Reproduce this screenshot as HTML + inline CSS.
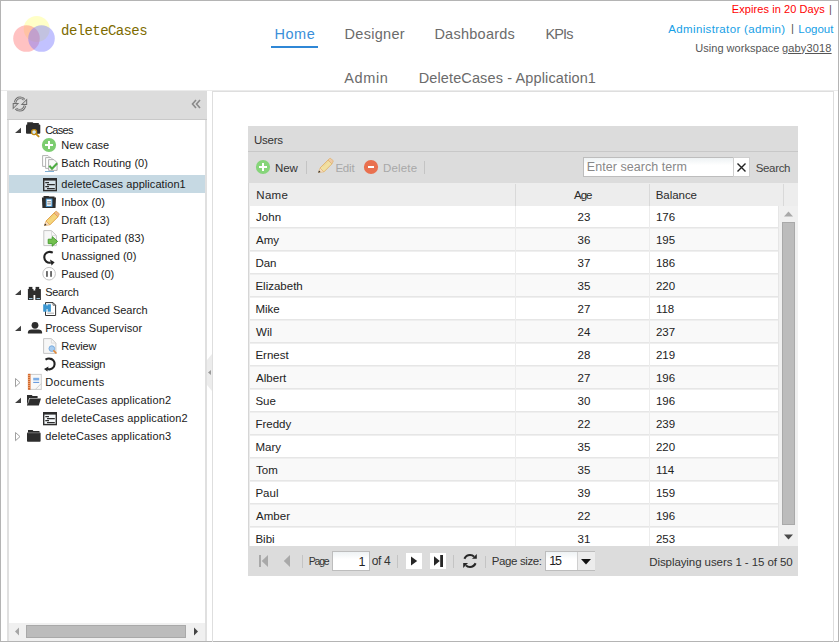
<!DOCTYPE html>
<html><head><meta charset="utf-8"><style>
html,body{margin:0;padding:0;width:839px;height:642px;overflow:hidden;background:#fff}
body{position:relative;font-family:"Liberation Sans", sans-serif}
.r{position:absolute;display:block}
.t{position:absolute;white-space:nowrap;font-family:"Liberation Sans", sans-serif}
</style></head><body>
<div class="r" style="left:0px;top:0px;width:839px;height:642px;background:#fff;"></div>
<div class="r" style="left:0px;top:90px;width:839px;height:1px;background:#ebebeb;"></div>
<div class="r" style="left:0px;top:0px;width:839px;height:1px;background:#b4b4b4;"></div>
<div class="r" style="left:0px;top:0px;width:1px;height:642px;background:#b4b4b4;"></div>
<div class="r" style="left:838px;top:0px;width:1px;height:642px;background:#b4b4b4;"></div>
<div class="r" style="left:0px;top:641px;width:839px;height:1px;background:#b4b4b4;"></div>
<svg class="r" style="left:10px;top:12px" width="50" height="42" viewBox="0 0 50 42"><circle cx="26.7" cy="17" r="13" fill="#ffff99" fill-opacity="0.55"/>
<circle cx="16.5" cy="26.5" r="13.3" fill="#ff7777" fill-opacity="0.45"/>
<circle cx="31.5" cy="26.5" r="13.3" fill="#7777ff" fill-opacity="0.45"/></svg>
<div class="t" style="left:61.10px;top:24.15px;font-size:14px;line-height:14px;color:#7d6b00;letter-spacing:-0.594px;font-family:'Liberation Mono', monospace;">deleteCases</div>
<div class="t" style="left:274.47px;top:26.73px;font-size:14.5px;line-height:14.5px;color:#3b8fd9;letter-spacing:0.516px;font-family:'Liberation Sans', sans-serif;">Home</div>
<div class="r" style="left:271px;top:46px;width:47px;height:2px;background:#2f87d6;"></div>
<div class="t" style="left:344.57px;top:26.73px;font-size:14.5px;line-height:14.5px;color:#6b6b6b;letter-spacing:0.283px;font-family:'Liberation Sans', sans-serif;">Designer</div>
<div class="t" style="left:434.38px;top:26.73px;font-size:14.5px;line-height:14.5px;color:#6b6b6b;letter-spacing:0.254px;font-family:'Liberation Sans', sans-serif;">Dashboards</div>
<div class="t" style="left:545.48px;top:26.73px;font-size:14.5px;line-height:14.5px;color:#6b6b6b;letter-spacing:-0.859px;font-family:'Liberation Sans', sans-serif;">KPIs</div>
<div class="t" style="left:344.17px;top:70.73px;font-size:14.5px;line-height:14.5px;color:#6b6b6b;letter-spacing:0.667px;font-family:'Liberation Sans', sans-serif;">Admin</div>
<div class="t" style="left:418.67px;top:70.73px;font-size:14.5px;line-height:14.5px;color:#6b6b6b;letter-spacing:0.127px;font-family:'Liberation Sans', sans-serif;">DeleteCases - Application1</div>
<div class="t" style="left:731.75px;top:4.39px;font-size:11px;line-height:11px;color:#ff0000;letter-spacing:0.082px;font-family:'Liberation Sans', sans-serif;">Expires in 20 Days</div>
<div class="t" style="left:829.05px;top:3.69px;font-size:11px;line-height:11px;color:#6a4a4a;font-family:'Liberation Sans', sans-serif;">|</div>
<div class="t" style="left:668.32px;top:23.87px;font-size:11.5px;line-height:11.5px;color:#16a0e6;letter-spacing:0.347px;font-family:'Liberation Sans', sans-serif;">Administrator (admin)</div>
<div class="t" style="left:790.92px;top:22.87px;font-size:11.5px;line-height:11.5px;color:#555;font-family:'Liberation Sans', sans-serif;">|</div>
<div class="t" style="left:798.22px;top:23.87px;font-size:11.5px;line-height:11.5px;color:#16a0e6;letter-spacing:0.013px;font-family:'Liberation Sans', sans-serif;">Logout</div>
<div class="t" style="left:695.25px;top:42.69px;font-size:11px;line-height:11px;color:#555;letter-spacing:0.031px;font-family:'Liberation Sans', sans-serif;">Using workspace</div>
<div class="t" style="left:781.95px;top:42.69px;font-size:11px;line-height:11px;color:#555;letter-spacing:0.167px;font-family:'Liberation Sans', sans-serif;text-decoration:underline;">gaby3018</div>
<div class="r" style="left:7px;top:91px;width:200px;height:28px;background:#dcdcdc;"></div>
<div class="r" style="left:7px;top:119px;width:200px;height:1px;background:#c9c9c9;"></div>
<div class="r" style="left:7px;top:120px;width:2px;height:521px;background:#e0e0e0;"></div>
<div class="r" style="left:205px;top:120px;width:2px;height:521px;background:#e0e0e0;"></div>
<svg class="r" style="left:11px;top:95px" width="18" height="18" viewBox="11 95 18 18"><g fill="none" stroke="#6e6e6e" stroke-width="2.6"><path d="M15 102.6 Q16.2 97.8 20.2 97.8 Q22.9 97.8 24.2 99.8"/><path d="M25 105.6 Q23.8 110.2 19.8 110.2 Q17.1 110.2 15.8 108.4"/></g>
<path d="M27.2 98.4 V104.9 H20.7 Z" fill="#6e6e6e"/><path d="M12.7 109.6 V103.1 H19.2 Z" fill="#6e6e6e"/>
<g fill="none" stroke="#cfcfcf" stroke-width="0.9"><path d="M15 102.6 Q16.2 97.8 20.2 97.8 Q22.9 97.8 24.2 99.8"/><path d="M25 105.6 Q23.8 110.2 19.8 110.2 Q17.1 110.2 15.8 108.4"/></g>
<path d="M26.2 100.6 V103.9 H22.9 Z" fill="#cfcfcf"/><path d="M13.7 107.4 V104.1 H17 Z" fill="#cfcfcf"/></svg>
<svg class="r" style="left:190px;top:98px" width="12" height="12" viewBox="0 0 12 12"><path d="M6 2 L2.5 6 L6 10 M10 2 L6.5 6 L10 10" fill="none" stroke="#8a8a8a" stroke-width="1.6"/></svg>
<div class="r" style="left:9px;top:623px;width:196px;height:18px;background:#f0f0f0;"></div>
<svg class="r" style="left:14px;top:627px" width="6" height="9" viewBox="0 0 6 9"><path d="M5 0.5 L1 4.5 L5 8.5Z" fill="#a5a5a5"/></svg>
<div class="r" style="left:26px;top:625px;width:160px;height:13px;background:#bcbcbc;box-sizing:border-box;border:1px solid #a9a9a9;"></div>
<svg class="r" style="left:193px;top:627px" width="6" height="9" viewBox="0 0 6 9"><path d="M1 0.5 L5 4.5 L1 8.5Z" fill="#444"/></svg>
<svg class="r" style="left:207px;top:354px" width="6" height="37" viewBox="0 0 6 37"><path d="M0 6 L5 0 L5 37 L0 31 Z" fill="#ececec"/><path d="M4 16 L1 18.5 L4 21Z" fill="#9a9a9a"/></svg>
<div class="r" style="left:212px;top:91px;width:622px;height:1px;background:#dedede;"></div>
<div class="r" style="left:212px;top:91px;width:1px;height:551px;background:#dedede;"></div>
<div class="r" style="left:833px;top:91px;width:1px;height:551px;background:#dedede;"></div>
<div class="r" style="left:9px;top:175px;width:196px;height:18px;background:#c6d9e3;"></div>
<div class="t" style="left:45.15px;top:124.69px;font-size:11px;line-height:11px;color:#1a1a1a;letter-spacing:-0.717px;font-family:'Liberation Sans', sans-serif;">Cases</div>
<div class="t" style="left:61.35px;top:140.29px;font-size:11px;line-height:11px;color:#1a1a1a;letter-spacing:-0.092px;font-family:'Liberation Sans', sans-serif;">New case</div>
<div class="t" style="left:61.35px;top:158.39px;font-size:11px;line-height:11px;color:#1a1a1a;letter-spacing:0.064px;font-family:'Liberation Sans', sans-serif;">Batch Routing (0)</div>
<div class="t" style="left:61.35px;top:179.19px;font-size:11px;line-height:11px;color:#1a1a1a;letter-spacing:0.063px;font-family:'Liberation Sans', sans-serif;">deleteCases application1</div>
<div class="t" style="left:61.35px;top:197.39px;font-size:11px;line-height:11px;color:#1a1a1a;letter-spacing:0.026px;font-family:'Liberation Sans', sans-serif;">Inbox (0)</div>
<div class="t" style="left:61.35px;top:214.59px;font-size:11px;line-height:11px;color:#1a1a1a;letter-spacing:0.204px;font-family:'Liberation Sans', sans-serif;">Draft (13)</div>
<div class="t" style="left:61.35px;top:232.59px;font-size:11px;line-height:11px;color:#1a1a1a;letter-spacing:0.148px;font-family:'Liberation Sans', sans-serif;">Participated (83)</div>
<div class="t" style="left:61.35px;top:251.19px;font-size:11px;line-height:11px;color:#1a1a1a;letter-spacing:0.037px;font-family:'Liberation Sans', sans-serif;">Unassigned (0)</div>
<div class="t" style="left:61.35px;top:268.69px;font-size:11px;line-height:11px;color:#1a1a1a;letter-spacing:-0.119px;font-family:'Liberation Sans', sans-serif;">Paused (0)</div>
<div class="t" style="left:45.15px;top:287.49px;font-size:11px;line-height:11px;color:#1a1a1a;letter-spacing:-0.248px;font-family:'Liberation Sans', sans-serif;">Search</div>
<div class="t" style="left:61.35px;top:305.19px;font-size:11px;line-height:11px;color:#1a1a1a;letter-spacing:-0.040px;font-family:'Liberation Sans', sans-serif;">Advanced Search</div>
<div class="t" style="left:45.15px;top:323.29px;font-size:11px;line-height:11px;color:#1a1a1a;letter-spacing:0.096px;font-family:'Liberation Sans', sans-serif;">Process Supervisor</div>
<div class="t" style="left:61.35px;top:341.49px;font-size:11px;line-height:11px;color:#1a1a1a;letter-spacing:-0.183px;font-family:'Liberation Sans', sans-serif;">Review</div>
<div class="t" style="left:61.35px;top:359.19px;font-size:11px;line-height:11px;color:#1a1a1a;letter-spacing:-0.255px;font-family:'Liberation Sans', sans-serif;">Reassign</div>
<div class="t" style="left:45.15px;top:377.29px;font-size:11px;line-height:11px;color:#1a1a1a;letter-spacing:0.420px;font-family:'Liberation Sans', sans-serif;">Documents</div>
<div class="t" style="left:45.15px;top:395.49px;font-size:11px;line-height:11px;color:#1a1a1a;letter-spacing:0.128px;font-family:'Liberation Sans', sans-serif;">deleteCases application2</div>
<div class="t" style="left:61.35px;top:413.19px;font-size:11px;line-height:11px;color:#1a1a1a;letter-spacing:0.150px;font-family:'Liberation Sans', sans-serif;">deleteCases application2</div>
<div class="t" style="left:45.15px;top:431.29px;font-size:11px;line-height:11px;color:#1a1a1a;letter-spacing:0.128px;font-family:'Liberation Sans', sans-serif;">deleteCases application3</div>
<svg class="r" style="left:13px;top:127px" width="10" height="8" viewBox="13 127 10 8"><path d="M15 133 L21 127.7 L21 133 Z" fill="#404040"/></svg>
<svg class="r" style="left:13px;top:289px" width="10" height="8" viewBox="13 289 10 8"><path d="M15 295 L21 289.7 L21 295 Z" fill="#404040"/></svg>
<svg class="r" style="left:13px;top:324.5px" width="10" height="8.0" viewBox="13 324.5 10 8.0"><path d="M15 330.5 L21 325.2 L21 330.5 Z" fill="#404040"/></svg>
<svg class="r" style="left:13px;top:397px" width="10" height="8" viewBox="13 397 10 8"><path d="M15 403 L21 397.7 L21 403 Z" fill="#404040"/></svg>
<svg class="r" style="left:13px;top:376.5px" width="10" height="12.0" viewBox="13 376.5 10 12.0"><path d="M15.5 378.0 L20 382.1 L15.5 386.2 Z" fill="#fff" stroke="#a0a0a0" stroke-width="1"/></svg>
<svg class="r" style="left:13px;top:430.5px" width="10" height="12.0" viewBox="13 430.5 10 12.0"><path d="M15.5 432.0 L20 436.1 L15.5 440.2 Z" fill="#fff" stroke="#a0a0a0" stroke-width="1"/></svg>
<svg class="r" style="left:24px;top:120px" width="18" height="20" viewBox="24 120 18 20"><path d="M27.2 122.3 H32.6 L33.4 123 H38.8 V125 H27.2 Z" fill="#2d2d2d"/>
<rect x="26" y="124.4" width="14.3" height="9.4" rx="1" fill="#2d2d2d"/>
<circle cx="34.1" cy="132.1" r="2.5" fill="#d3e9f8" stroke="#c08a14" stroke-width="1.3"/>
<path d="M35.9 133.9 L38.6 136.4" stroke="#c08a14" stroke-width="1.9" stroke-linecap="round"/></svg>
<svg class="r" style="left:41px;top:137px" width="16" height="16" viewBox="41 137 16 16"><circle cx="49" cy="145" r="7.1" fill="#7ccd70"/><rect x="48" y="141" width="2" height="8" fill="#fff"/><rect x="45" y="144" width="8" height="2" fill="#fff"/></svg>
<svg class="r" style="left:40px;top:153px" width="20" height="21" viewBox="40 153 20 21"><path d="M42.6 155.6 H48 L49.6 157.2 V166.4 H42.6 Z" fill="#fff" stroke="#a9a9a9" stroke-width="0.9"/>
<path d="M45.6 157.6 H51 L52.6 159.2 V168.4 H45.6 Z" fill="#fff" stroke="#a9a9a9" stroke-width="0.9"/>
<path d="M48.6 159.6 H54 L57.1 162.7 V170.4 H48.6 Z" fill="#fafafa" stroke="#a9a9a9" stroke-width="0.9"/>
<path d="M49.3 165.8 L52 168.8 L57.2 163.3" fill="none" stroke="#4eac43" stroke-width="2.1"/>
<path d="M45 171.5 H54" stroke="#6fa6cf" stroke-width="0.9"/></svg>
<svg class="r" style="left:42px;top:176.8px" width="17" height="16.0" viewBox="42 176.8 17 16.0"><rect x="43.7" y="178.5" width="12.6" height="11.9" fill="#e8f0f4" fill-opacity="0.5" stroke="#2d2d2d" stroke-width="1.4"/>
<rect x="43" y="177.8" width="14" height="2.6" fill="#2d2d2d"/>
<path d="M45.3 182.5 H49 M47 184.5 H54.8 M45.3 186.5 H49 M47 188.5 H54.8" stroke="#2d2d2d" stroke-width="1.2"/></svg>
<svg class="r" style="left:42px;top:411px" width="17" height="16" viewBox="42 411 17 16"><rect x="43.7" y="412.7" width="12.6" height="11.9" fill="#e8f0f4" fill-opacity="0.5" stroke="#2d2d2d" stroke-width="1.4"/>
<rect x="43" y="412" width="14" height="2.6" fill="#2d2d2d"/>
<path d="M45.3 416.7 H49 M47 418.7 H54.8 M45.3 420.7 H49 M47 422.7 H54.8" stroke="#2d2d2d" stroke-width="1.2"/></svg>
<svg class="r" style="left:40px;top:194px" width="18" height="16" viewBox="40 194 18 16"><path d="M43.5 196 H48.5 L49.3 196.6 H54.5 V198 H43.5 Z" fill="#2d2d2d"/>
<path d="M41.9 197.6 H56 L55.5 207.9 H42.4 Z" fill="#2d2d2d"/>
<rect x="45.8" y="198.6" width="6.6" height="8.3" fill="#4b9ad4"/>
<rect x="46.8" y="199.6" width="4.6" height="6.3" fill="#fff"/>
<path d="M47.3 201.8 H50.9 M47.3 203.9 H50.9" stroke="#555" stroke-width="0.8"/></svg>
<svg class="r" style="left:43px;top:209px" width="18" height="18" viewBox="43 209 18 18"><path d="M46.0 221.0 L54.0 213.0 L57.9 216.9 L49.9 224.9 Z" fill="#f5d67c" stroke="#e3a64f" stroke-width="1"/>
<path d="M49 219.5 L55.5 213" stroke="#e3a64f" stroke-width="0.5" opacity="0.6"/>
<path d="M54.0 213.0 L55.3 211.7 Q56.3 210.9 57.3 211.9 L58.9 213.5 Q59.5 214.5 58.7 215.3 L57.9 216.9 Z" fill="#eeb88a" stroke="#e3a64f" stroke-width="0.9"/>
<path d="M46.0 221.0 L44.4 225.6 L49.9 224.9 Z" fill="#f6dcc0" stroke="#e3a64f" stroke-width="0.6"/>
<path d="M44.2 225.8 L45.0 223.6 L46.5 225.1 Z" fill="#222"/></svg>
<svg class="r" style="left:41px;top:228px" width="19" height="20" viewBox="41 228 19 20"><path d="M43.8 230.6 H51.5 L56.4 235.5 V245.6 H43.8 Z" fill="#f7f7f7" stroke="#c6c6c6" stroke-width="1"/>
<path d="M51.5 230.6 V235.5 H56.4" fill="none" stroke="#d6d6d6" stroke-width="0.8"/>
<path d="M48.2 239.2 H52.2 V236.6 L57.6 241.4 L52.2 246.2 V243.6 H48.2 Z" fill="#74c04f" stroke="#3f9a2b" stroke-width="0.9"/></svg>
<svg class="r" style="left:41px;top:249px" width="16" height="18" viewBox="41 249 16 18"><path d="M52.8 252.6 Q50.5 251.6 48.6 252 A5.3 5.3 0 0 0 44.3 257.5 A5.2 5.2 0 0 0 50.8 262.6" fill="none" stroke="#222" stroke-width="2.1"/>
<path d="M50 259.6 L54.6 262.2 L51.6 265.6 Z" fill="#222"/></svg>
<svg class="r" style="left:41px;top:266px" width="16" height="16" viewBox="41 266 16 16"><circle cx="49.1" cy="273.7" r="6.3" fill="#fff" stroke="#c4c4c4" stroke-width="1"/><rect x="46" y="271.1" width="1.9" height="5.7" fill="#6a6a6a"/><rect x="50.1" y="271.1" width="1.9" height="5.7" fill="#6a6a6a"/></svg>
<svg class="r" style="left:26px;top:286px" width="16" height="15" viewBox="26 286 16 15"><rect x="28.8" y="286.9" width="3.6" height="2.7" fill="#2d2d2d"/><rect x="35.6" y="286.9" width="3.6" height="2.7" fill="#2d2d2d"/>
<rect x="27.9" y="289" width="5.6" height="11" rx="0.6" fill="#2d2d2d"/><rect x="35.3" y="289" width="5.6" height="11" rx="0.6" fill="#2d2d2d"/>
<rect x="33" y="290.5" width="3" height="4.5" fill="#2d2d2d"/>
<path d="M29 298.6 H32.5 M36.5 298.6 H40" stroke="#a8d6f0" stroke-width="1"/></svg>
<svg class="r" style="left:42px;top:301px" width="16" height="16" viewBox="42 301 16 16"><path d="M45.5 302.6 H53 L55.6 305.2 V315.5 H45.5 Z" fill="#fff" stroke="#333" stroke-width="1"/>
<path d="M53 302.6 V305.2 H55.6" fill="none" stroke="#333" stroke-width="0.7"/>
<rect x="43.2" y="304.3" width="3.3" height="7.4" fill="#3c96d0"/><rect x="47.6" y="304.3" width="3.3" height="7.4" fill="#3c96d0"/><rect x="46" y="305.5" width="2" height="3.6" fill="#3c96d0"/>
<path d="M47.3 313.2 H54" stroke="#b8b8b8" stroke-width="1.2"/></svg>
<svg class="r" style="left:26px;top:320px" width="18" height="15" viewBox="26 320 18 15"><circle cx="35" cy="325.3" r="3.4" fill="#2d2d2d"/><path d="M27.9 333.6 V332.4 Q28.2 329.6 31.5 329.6 H38.5 Q41.8 329.6 42.1 332.4 V333.6 Z" fill="#2d2d2d"/></svg>
<svg class="r" style="left:42px;top:337px" width="16" height="18" viewBox="42 337 16 18"><path d="M43.6 338.6 H51.4 L55.9 343.1 V353.4 H43.6 Z" fill="#f7f7f7" stroke="#c6c6c6" stroke-width="1"/>
<path d="M51.4 338.6 V343.1 H55.9" fill="none" stroke="#d6d6d6" stroke-width="0.8"/>
<circle cx="51.8" cy="348.6" r="2.8" fill="#a9cdf0" stroke="#78ace0" stroke-width="1"/>
<path d="M53.9 350.8 L56 353" stroke="#e08a3a" stroke-width="1.7" stroke-linecap="round"/></svg>
<svg class="r" style="left:42px;top:356px" width="15" height="17" viewBox="42 356 15 17"><path d="M45.5 359.6 Q47.6 358.4 49.6 358.6 A5.2 5.2 0 0 1 54.6 364.3 A5.2 5.2 0 0 1 47.5 369" fill="none" stroke="#222" stroke-width="2.1"/>
<path d="M48.5 366.4 L44 368.9 L47.4 371.6 Z" fill="#222"/></svg>
<svg class="r" style="left:26px;top:373px" width="18" height="18" viewBox="26 373 18 18"><rect x="29.5" y="374.4" width="11.8" height="15" fill="#f9f9f9" stroke="#cdcdcd" stroke-width="1"/>
<rect x="27.9" y="373.8" width="2.6" height="16" fill="#d36a2e"/>
<path d="M27.9 375.5 H30.5 M27.9 377.5 H30.5 M27.9 379.5 H30.5 M27.9 381.5 H30.5 M27.9 383.5 H30.5 M27.9 385.5 H30.5 M27.9 387.5 H30.5" stroke="#f3b58a" stroke-width="0.7"/>
<rect x="33.2" y="377.8" width="6" height="2.6" fill="#7eaee6"/><path d="M33.2 382.4 H39.2" stroke="#5b92dc" stroke-width="1"/>
<path d="M35.5 389.3 L41.3 383.5" stroke="#c4c4c4" stroke-width="0.8"/></svg>
<svg class="r" style="left:26px;top:394px" width="17" height="13" viewBox="26 394 17 13"><path d="M27 395 H31.8 L32.6 395.9 H37.6 V398 H29.2 L27.6 403.5 V405.6 H27 Z" fill="#2d2d2d"/>
<path d="M27.2 405.6 L29.6 398.6 H41 L38.8 405.6 Z" fill="#2d2d2d"/>
<path d="M29.5 399 L28 403.5" stroke="#9a9a9a" stroke-width="0.5"/></svg>
<svg class="r" style="left:26px;top:429px" width="16" height="14" viewBox="26 429 16 14"><path d="M28 430 H32.6 L33.4 430.9 H39.5 V433 H28 Z" fill="#2d2d2d"/>
<rect x="27" y="432.6" width="13.6" height="9.1" rx="0.8" fill="#2d2d2d"/>
<path d="M27.8 432.8 H39.8" stroke="#bdbdbd" stroke-width="0.5"/></svg>
<div class="r" style="left:248px;top:126px;width:550px;height:25px;background:#dcdcdc;"></div>
<div class="r" style="left:248px;top:151px;width:550px;height:1px;background:#c8c8c8;"></div>
<div class="r" style="left:248px;top:152px;width:550px;height:31px;background:#dcdcdc;"></div>
<div class="t" style="left:254.12px;top:135.27px;font-size:11.5px;line-height:11.5px;color:#333;letter-spacing:-0.304px;font-family:'Liberation Sans', sans-serif;">Users</div>
<svg class="r" style="left:255px;top:159px" width="16" height="16" viewBox="255 159 16 16"><circle cx="263" cy="167" r="7.1" fill="#86d57a"/><rect x="262" y="163" width="2" height="8" fill="#fff"/><rect x="259" y="166" width="8" height="2" fill="#fff"/></svg>
<div class="t" style="left:274.93px;top:163.17px;font-size:11.5px;line-height:11.5px;color:#333;letter-spacing:-0.075px;font-family:'Liberation Sans', sans-serif;">New</div>
<div class="r" style="left:306px;top:161px;width:1px;height:13px;background:#c4c4c4;"></div>
<svg class="r" style="left:316.6px;top:156.3px" width="18.0" height="18.0" viewBox="316.6 156.3 18.0 18.0"><path d="M319.6 168.3 L327.6 160.3 L331.5 164.20000000000002 L323.5 172.20000000000002 Z" fill="#f1e0a2" stroke="#e0b777" stroke-width="1"/>
<path d="M322.6 166.8 L329.1 160.3" stroke="#e0b777" stroke-width="0.5" opacity="0.6"/>
<path d="M327.6 160.3 L328.90000000000003 159.0 Q329.90000000000003 158.20000000000002 330.90000000000003 159.20000000000002 L332.5 160.8 Q333.1 161.8 332.3 162.60000000000002 L331.5 164.20000000000002 Z" fill="#efc9a6" stroke="#e0b777" stroke-width="0.9"/>
<path d="M319.6 168.3 L318.0 172.9 L323.5 172.20000000000002 Z" fill="#f6dcc0" stroke="#e0b777" stroke-width="0.6"/>
<path d="M317.8 173.10000000000002 L318.6 170.9 L320.1 172.4 Z" fill="#222"/></svg>
<div class="t" style="left:335.43px;top:163.17px;font-size:11.5px;line-height:11.5px;color:#a8a8a8;letter-spacing:-0.220px;font-family:'Liberation Sans', sans-serif;">Edit</div>
<svg class="r" style="left:362px;top:158px" width="18" height="18" viewBox="362 158 18 18"><circle cx="371" cy="167" r="7.1" fill="#e9704f"/><rect x="368" y="166" width="6" height="2" fill="#fff"/></svg>
<div class="t" style="left:383.12px;top:163.17px;font-size:11.5px;line-height:11.5px;color:#a8a8a8;letter-spacing:0.143px;font-family:'Liberation Sans', sans-serif;">Delete</div>
<div class="r" style="left:424px;top:161px;width:1px;height:13px;background:#c4c4c4;"></div>
<div class="r" style="left:583px;top:157px;width:151px;height:20px;background:#fff;box-sizing:border-box;border:1px solid #bdbdbd;background:linear-gradient(#eef2f4,#fff 40%);"></div>
<div class="t" style="left:586.77px;top:160.82px;font-size:12.5px;line-height:12.5px;color:#888;letter-spacing:0.052px;font-family:'Liberation Sans', sans-serif;">Enter search term</div>
<div class="r" style="left:733px;top:157px;width:17px;height:20px;background:#fff;box-sizing:border-box;border:1px solid #cfcfcf;"></div>
<svg class="r" style="left:736px;top:162px" width="11" height="11" viewBox="0 0 11 11"><path d="M1.5 1.5 L9.5 9.5 M9.5 1.5 L1.5 9.5" stroke="#222" stroke-width="1.4"/></svg>
<div class="t" style="left:755.72px;top:163.17px;font-size:11.5px;line-height:11.5px;color:#444;letter-spacing:-0.340px;font-family:'Liberation Sans', sans-serif;">Search</div>
<div class="r" style="left:248px;top:183px;width:1px;height:363px;background:#d6d6d6;"></div>
<div class="r" style="left:249px;top:183px;width:1px;height:363px;background:#ebebeb;"></div>
<div class="r" style="left:250px;top:183px;width:548px;height:23px;background:#ededed;"></div>
<div class="r" style="left:515px;top:184px;width:1px;height:22px;background:#d9d9d9;"></div>
<div class="r" style="left:649px;top:184px;width:1px;height:22px;background:#d9d9d9;"></div>
<div class="r" style="left:783px;top:184px;width:1px;height:22px;background:#d9d9d9;"></div>
<div class="t" style="left:256.32px;top:190.07px;font-size:11.5px;line-height:11.5px;color:#2a2a2a;letter-spacing:0.287px;font-family:'Liberation Sans', sans-serif;">Name</div>
<div class="t" style="left:574.12px;top:190.07px;font-size:11.5px;line-height:11.5px;color:#2a2a2a;letter-spacing:-1.053px;font-family:'Liberation Sans', sans-serif;">Age</div>
<div class="t" style="left:655.72px;top:190.07px;font-size:11.5px;line-height:11.5px;color:#2a2a2a;letter-spacing:-0.047px;font-family:'Liberation Sans', sans-serif;">Balance</div>
<div class="r" style="left:250px;top:206px;width:529px;height:340px;overflow:hidden">
<div class="r" style="left:0;top:0px;width:529px;height:21px;background:#ffffff"></div>
<div class="r" style="left:0;top:21px;width:529px;height:1px;background:#e6e6e6"></div>
<div class="r" style="left:0;top:22px;width:529px;height:1px;background:#efefef"></div>
<div class="r" style="left:265px;top:0px;width:1px;height:23px;background:#ececec"></div>
<div class="r" style="left:399px;top:0px;width:1px;height:23px;background:#ececec"></div>
<div class="r" style="left:0;top:23px;width:529px;height:21px;background:#f9f9f9"></div>
<div class="r" style="left:0;top:44px;width:529px;height:1px;background:#e6e6e6"></div>
<div class="r" style="left:0;top:45px;width:529px;height:1px;background:#efefef"></div>
<div class="r" style="left:265px;top:23px;width:1px;height:23px;background:#ececec"></div>
<div class="r" style="left:399px;top:23px;width:1px;height:23px;background:#ececec"></div>
<div class="r" style="left:0;top:46px;width:529px;height:21px;background:#ffffff"></div>
<div class="r" style="left:0;top:67px;width:529px;height:1px;background:#e6e6e6"></div>
<div class="r" style="left:0;top:68px;width:529px;height:1px;background:#efefef"></div>
<div class="r" style="left:265px;top:46px;width:1px;height:23px;background:#ececec"></div>
<div class="r" style="left:399px;top:46px;width:1px;height:23px;background:#ececec"></div>
<div class="r" style="left:0;top:69px;width:529px;height:21px;background:#f9f9f9"></div>
<div class="r" style="left:0;top:90px;width:529px;height:1px;background:#e6e6e6"></div>
<div class="r" style="left:0;top:91px;width:529px;height:1px;background:#efefef"></div>
<div class="r" style="left:265px;top:69px;width:1px;height:23px;background:#ececec"></div>
<div class="r" style="left:399px;top:69px;width:1px;height:23px;background:#ececec"></div>
<div class="r" style="left:0;top:92px;width:529px;height:21px;background:#ffffff"></div>
<div class="r" style="left:0;top:113px;width:529px;height:1px;background:#e6e6e6"></div>
<div class="r" style="left:0;top:114px;width:529px;height:1px;background:#efefef"></div>
<div class="r" style="left:265px;top:92px;width:1px;height:23px;background:#ececec"></div>
<div class="r" style="left:399px;top:92px;width:1px;height:23px;background:#ececec"></div>
<div class="r" style="left:0;top:115px;width:529px;height:21px;background:#f9f9f9"></div>
<div class="r" style="left:0;top:136px;width:529px;height:1px;background:#e6e6e6"></div>
<div class="r" style="left:0;top:137px;width:529px;height:1px;background:#efefef"></div>
<div class="r" style="left:265px;top:115px;width:1px;height:23px;background:#ececec"></div>
<div class="r" style="left:399px;top:115px;width:1px;height:23px;background:#ececec"></div>
<div class="r" style="left:0;top:138px;width:529px;height:21px;background:#ffffff"></div>
<div class="r" style="left:0;top:159px;width:529px;height:1px;background:#e6e6e6"></div>
<div class="r" style="left:0;top:160px;width:529px;height:1px;background:#efefef"></div>
<div class="r" style="left:265px;top:138px;width:1px;height:23px;background:#ececec"></div>
<div class="r" style="left:399px;top:138px;width:1px;height:23px;background:#ececec"></div>
<div class="r" style="left:0;top:161px;width:529px;height:21px;background:#f9f9f9"></div>
<div class="r" style="left:0;top:182px;width:529px;height:1px;background:#e6e6e6"></div>
<div class="r" style="left:0;top:183px;width:529px;height:1px;background:#efefef"></div>
<div class="r" style="left:265px;top:161px;width:1px;height:23px;background:#ececec"></div>
<div class="r" style="left:399px;top:161px;width:1px;height:23px;background:#ececec"></div>
<div class="r" style="left:0;top:184px;width:529px;height:21px;background:#ffffff"></div>
<div class="r" style="left:0;top:205px;width:529px;height:1px;background:#e6e6e6"></div>
<div class="r" style="left:0;top:206px;width:529px;height:1px;background:#efefef"></div>
<div class="r" style="left:265px;top:184px;width:1px;height:23px;background:#ececec"></div>
<div class="r" style="left:399px;top:184px;width:1px;height:23px;background:#ececec"></div>
<div class="r" style="left:0;top:207px;width:529px;height:21px;background:#f9f9f9"></div>
<div class="r" style="left:0;top:228px;width:529px;height:1px;background:#e6e6e6"></div>
<div class="r" style="left:0;top:229px;width:529px;height:1px;background:#efefef"></div>
<div class="r" style="left:265px;top:207px;width:1px;height:23px;background:#ececec"></div>
<div class="r" style="left:399px;top:207px;width:1px;height:23px;background:#ececec"></div>
<div class="r" style="left:0;top:230px;width:529px;height:21px;background:#ffffff"></div>
<div class="r" style="left:0;top:251px;width:529px;height:1px;background:#e6e6e6"></div>
<div class="r" style="left:0;top:252px;width:529px;height:1px;background:#efefef"></div>
<div class="r" style="left:265px;top:230px;width:1px;height:23px;background:#ececec"></div>
<div class="r" style="left:399px;top:230px;width:1px;height:23px;background:#ececec"></div>
<div class="r" style="left:0;top:253px;width:529px;height:21px;background:#f9f9f9"></div>
<div class="r" style="left:0;top:274px;width:529px;height:1px;background:#e6e6e6"></div>
<div class="r" style="left:0;top:275px;width:529px;height:1px;background:#efefef"></div>
<div class="r" style="left:265px;top:253px;width:1px;height:23px;background:#ececec"></div>
<div class="r" style="left:399px;top:253px;width:1px;height:23px;background:#ececec"></div>
<div class="r" style="left:0;top:276px;width:529px;height:21px;background:#ffffff"></div>
<div class="r" style="left:0;top:297px;width:529px;height:1px;background:#e6e6e6"></div>
<div class="r" style="left:0;top:298px;width:529px;height:1px;background:#efefef"></div>
<div class="r" style="left:265px;top:276px;width:1px;height:23px;background:#ececec"></div>
<div class="r" style="left:399px;top:276px;width:1px;height:23px;background:#ececec"></div>
<div class="r" style="left:0;top:299px;width:529px;height:21px;background:#f9f9f9"></div>
<div class="r" style="left:0;top:320px;width:529px;height:1px;background:#e6e6e6"></div>
<div class="r" style="left:0;top:321px;width:529px;height:1px;background:#efefef"></div>
<div class="r" style="left:265px;top:299px;width:1px;height:23px;background:#ececec"></div>
<div class="r" style="left:399px;top:299px;width:1px;height:23px;background:#ececec"></div>
<div class="r" style="left:0;top:322px;width:529px;height:21px;background:#ffffff"></div>
<div class="r" style="left:0;top:343px;width:529px;height:1px;background:#e6e6e6"></div>
<div class="r" style="left:0;top:344px;width:529px;height:1px;background:#efefef"></div>
<div class="r" style="left:265px;top:322px;width:1px;height:23px;background:#ececec"></div>
<div class="r" style="left:399px;top:322px;width:1px;height:23px;background:#ececec"></div>
</div>
<div class="t" style="left:256.12px;top:212.27px;font-size:11.5px;line-height:11.5px;color:#222;font-family:'Liberation Sans', sans-serif;">John</div>
<div class="t" style="left:577.53px;top:212.27px;font-size:11.5px;line-height:11.5px;color:#222;font-family:'Liberation Sans', sans-serif;">23</div>
<div class="t" style="left:655.92px;top:212.27px;font-size:11.5px;line-height:11.5px;color:#222;font-family:'Liberation Sans', sans-serif;">176</div>
<div class="t" style="left:256.12px;top:235.27px;font-size:11.5px;line-height:11.5px;color:#222;font-family:'Liberation Sans', sans-serif;">Amy</div>
<div class="t" style="left:577.53px;top:235.27px;font-size:11.5px;line-height:11.5px;color:#222;font-family:'Liberation Sans', sans-serif;">36</div>
<div class="t" style="left:655.92px;top:235.27px;font-size:11.5px;line-height:11.5px;color:#222;font-family:'Liberation Sans', sans-serif;">195</div>
<div class="t" style="left:255.43px;top:258.27px;font-size:11.5px;line-height:11.5px;color:#222;font-family:'Liberation Sans', sans-serif;">Dan</div>
<div class="t" style="left:577.53px;top:258.27px;font-size:11.5px;line-height:11.5px;color:#222;font-family:'Liberation Sans', sans-serif;">37</div>
<div class="t" style="left:655.92px;top:258.27px;font-size:11.5px;line-height:11.5px;color:#222;font-family:'Liberation Sans', sans-serif;">186</div>
<div class="t" style="left:255.43px;top:281.27px;font-size:11.5px;line-height:11.5px;color:#222;font-family:'Liberation Sans', sans-serif;">Elizabeth</div>
<div class="t" style="left:577.53px;top:281.27px;font-size:11.5px;line-height:11.5px;color:#222;font-family:'Liberation Sans', sans-serif;">35</div>
<div class="t" style="left:655.92px;top:281.27px;font-size:11.5px;line-height:11.5px;color:#222;font-family:'Liberation Sans', sans-serif;">220</div>
<div class="t" style="left:255.43px;top:304.27px;font-size:11.5px;line-height:11.5px;color:#222;font-family:'Liberation Sans', sans-serif;">Mike</div>
<div class="t" style="left:577.53px;top:304.27px;font-size:11.5px;line-height:11.5px;color:#222;font-family:'Liberation Sans', sans-serif;">27</div>
<div class="t" style="left:655.92px;top:304.27px;font-size:11.5px;line-height:11.5px;color:#222;font-family:'Liberation Sans', sans-serif;">118</div>
<div class="t" style="left:256.12px;top:327.27px;font-size:11.5px;line-height:11.5px;color:#222;font-family:'Liberation Sans', sans-serif;">Wil</div>
<div class="t" style="left:577.53px;top:327.27px;font-size:11.5px;line-height:11.5px;color:#222;font-family:'Liberation Sans', sans-serif;">24</div>
<div class="t" style="left:655.92px;top:327.27px;font-size:11.5px;line-height:11.5px;color:#222;font-family:'Liberation Sans', sans-serif;">237</div>
<div class="t" style="left:255.43px;top:350.27px;font-size:11.5px;line-height:11.5px;color:#222;font-family:'Liberation Sans', sans-serif;">Ernest</div>
<div class="t" style="left:577.53px;top:350.27px;font-size:11.5px;line-height:11.5px;color:#222;font-family:'Liberation Sans', sans-serif;">28</div>
<div class="t" style="left:655.92px;top:350.27px;font-size:11.5px;line-height:11.5px;color:#222;font-family:'Liberation Sans', sans-serif;">219</div>
<div class="t" style="left:256.12px;top:373.27px;font-size:11.5px;line-height:11.5px;color:#222;font-family:'Liberation Sans', sans-serif;">Albert</div>
<div class="t" style="left:577.53px;top:373.27px;font-size:11.5px;line-height:11.5px;color:#222;font-family:'Liberation Sans', sans-serif;">27</div>
<div class="t" style="left:655.92px;top:373.27px;font-size:11.5px;line-height:11.5px;color:#222;font-family:'Liberation Sans', sans-serif;">196</div>
<div class="t" style="left:255.43px;top:396.27px;font-size:11.5px;line-height:11.5px;color:#222;font-family:'Liberation Sans', sans-serif;">Sue</div>
<div class="t" style="left:577.53px;top:396.27px;font-size:11.5px;line-height:11.5px;color:#222;font-family:'Liberation Sans', sans-serif;">30</div>
<div class="t" style="left:655.92px;top:396.27px;font-size:11.5px;line-height:11.5px;color:#222;font-family:'Liberation Sans', sans-serif;">196</div>
<div class="t" style="left:255.43px;top:419.27px;font-size:11.5px;line-height:11.5px;color:#222;font-family:'Liberation Sans', sans-serif;">Freddy</div>
<div class="t" style="left:577.53px;top:419.27px;font-size:11.5px;line-height:11.5px;color:#222;font-family:'Liberation Sans', sans-serif;">22</div>
<div class="t" style="left:655.92px;top:419.27px;font-size:11.5px;line-height:11.5px;color:#222;font-family:'Liberation Sans', sans-serif;">239</div>
<div class="t" style="left:255.43px;top:442.27px;font-size:11.5px;line-height:11.5px;color:#222;font-family:'Liberation Sans', sans-serif;">Mary</div>
<div class="t" style="left:577.53px;top:442.27px;font-size:11.5px;line-height:11.5px;color:#222;font-family:'Liberation Sans', sans-serif;">35</div>
<div class="t" style="left:655.92px;top:442.27px;font-size:11.5px;line-height:11.5px;color:#222;font-family:'Liberation Sans', sans-serif;">220</div>
<div class="t" style="left:256.12px;top:465.27px;font-size:11.5px;line-height:11.5px;color:#222;font-family:'Liberation Sans', sans-serif;">Tom</div>
<div class="t" style="left:577.53px;top:465.27px;font-size:11.5px;line-height:11.5px;color:#222;font-family:'Liberation Sans', sans-serif;">35</div>
<div class="t" style="left:655.92px;top:465.27px;font-size:11.5px;line-height:11.5px;color:#222;font-family:'Liberation Sans', sans-serif;">114</div>
<div class="t" style="left:255.43px;top:488.27px;font-size:11.5px;line-height:11.5px;color:#222;font-family:'Liberation Sans', sans-serif;">Paul</div>
<div class="t" style="left:577.53px;top:488.27px;font-size:11.5px;line-height:11.5px;color:#222;font-family:'Liberation Sans', sans-serif;">39</div>
<div class="t" style="left:655.92px;top:488.27px;font-size:11.5px;line-height:11.5px;color:#222;font-family:'Liberation Sans', sans-serif;">159</div>
<div class="t" style="left:256.12px;top:511.27px;font-size:11.5px;line-height:11.5px;color:#222;font-family:'Liberation Sans', sans-serif;">Amber</div>
<div class="t" style="left:577.53px;top:511.27px;font-size:11.5px;line-height:11.5px;color:#222;font-family:'Liberation Sans', sans-serif;">22</div>
<div class="t" style="left:655.92px;top:511.27px;font-size:11.5px;line-height:11.5px;color:#222;font-family:'Liberation Sans', sans-serif;">196</div>
<div class="t" style="left:255.43px;top:534.27px;font-size:11.5px;line-height:11.5px;color:#222;font-family:'Liberation Sans', sans-serif;">Bibi</div>
<div class="t" style="left:577.53px;top:534.27px;font-size:11.5px;line-height:11.5px;color:#222;font-family:'Liberation Sans', sans-serif;">31</div>
<div class="t" style="left:655.92px;top:534.27px;font-size:11.5px;line-height:11.5px;color:#222;font-family:'Liberation Sans', sans-serif;">253</div>
<div class="r" style="left:778px;top:206px;width:1px;height:340px;background:#e6e6e6;"></div>
<div class="r" style="left:779px;top:206px;width:19px;height:340px;background:#f0f0f0;"></div>
<svg class="r" style="left:783px;top:210px" width="11" height="8" viewBox="0 0 11 8"><path d="M1 6.5 L5.5 1.5 L10 6.5Z" fill="#a9a9a9"/></svg>
<div class="r" style="left:782px;top:222px;width:13px;height:303px;background:#bcbcbc;box-sizing:border-box;border:1px solid #a9a9a9;"></div>
<svg class="r" style="left:783px;top:533px" width="11" height="8" viewBox="0 0 11 8"><path d="M1 1.5 L5.5 6.5 L10 1.5Z" fill="#4a4a4a"/></svg>
<div class="r" style="left:248px;top:546px;width:550px;height:30px;background:#dcdcdc;"></div>
<svg class="r" style="left:255px;top:551px" width="40" height="20" viewBox="255 551 40 20"><rect x="259" y="555" width="2" height="12" fill="#a9a9a9"/><path d="M268 555 L261.7 561 L268 567 Z" fill="#a9a9a9"/><path d="M290 555 L283.8 561 L290 567 Z" fill="#a9a9a9"/></svg>
<div class="r" style="left:302px;top:555px;width:1px;height:13px;background:#c4c4c4;"></div>
<div class="t" style="left:308.68px;top:556.11px;font-size:10.5px;line-height:10.5px;color:#333;letter-spacing:-1.192px;font-family:'Liberation Sans', sans-serif;">Page</div>
<div class="r" style="left:332px;top:551px;width:38px;height:20px;background:#fff;box-sizing:border-box;border:1px solid #bdbdbd;background:linear-gradient(#eef2f4,#fff 40%);"></div>
<div class="t" style="left:358.38px;top:555.92px;font-size:12.5px;line-height:12.5px;color:#222;font-family:'Liberation Sans', sans-serif;">1</div>
<div class="t" style="left:371.80px;top:555.04px;font-size:12px;line-height:12px;color:#333;letter-spacing:-0.371px;font-family:'Liberation Sans', sans-serif;">of 4</div>
<div class="r" style="left:397px;top:555px;width:1px;height:13px;background:#c4c4c4;"></div>
<div class="r" style="left:406px;top:553px;width:16px;height:16px;background:#fff;"></div>
<div class="r" style="left:430px;top:553px;width:16px;height:16px;background:#fff;"></div>
<svg class="r" style="left:404px;top:551px" width="44" height="20" viewBox="404 551 44 20"><path d="M411 556.5 L417.2 561 L411 565.5 Z" fill="#262626"/><path d="M434 556.3 L439.8 561 L434 565.7 Z" fill="#262626"/><rect x="440.2" y="555" width="2.8" height="12" fill="#262626"/></svg>
<div class="r" style="left:453px;top:555px;width:1px;height:13px;background:#c4c4c4;"></div>
<svg class="r" style="left:460px;top:551px" width="20" height="20" viewBox="460 551 20 20"><path d="M464.4 558.7 Q466.2 555 470 555 Q472.6 555 474 556.6" fill="none" stroke="#262626" stroke-width="2.1"/>
<path d="M476.8 554 V558.8 H472 Z" fill="#262626"/>
<path d="M475.6 563.3 Q473.8 567 470 567 Q467.4 567 466 565.4" fill="none" stroke="#262626" stroke-width="2.1"/>
<path d="M463.2 567.9 V563.1 H468 Z" fill="#262626"/></svg>
<div class="r" style="left:485px;top:556px;width:1px;height:12px;background:#c4c4c4;"></div>
<div class="t" style="left:491.82px;top:556.47px;font-size:11.5px;line-height:11.5px;color:#333;letter-spacing:-0.385px;font-family:'Liberation Sans', sans-serif;">Page size:</div>
<div class="r" style="left:545px;top:551px;width:50px;height:20px;background:#fff;box-sizing:border-box;border:1px solid #bdbdbd;background:linear-gradient(#eef2f4,#fff 40%);"></div>
<div class="r" style="left:577px;top:552px;width:17px;height:18px;background:#ececec;border-left:1px solid #cfcfcf;"></div>
<svg class="r" style="left:580px;top:558px" width="12" height="8" viewBox="0 0 12 8"><path d="M1 1 L6 6.5 L11 1Z" fill="#111"/></svg>
<div class="t" style="left:549.17px;top:554.62px;font-size:12.5px;line-height:12.5px;color:#222;letter-spacing:-1.197px;font-family:'Liberation Sans', sans-serif;">15</div>
<div class="t" style="left:649.22px;top:557.27px;font-size:11.5px;line-height:11.5px;color:#333;letter-spacing:-0.079px;font-family:'Liberation Sans', sans-serif;">Displaying users 1 - 15 of 50</div>
</body></html>
